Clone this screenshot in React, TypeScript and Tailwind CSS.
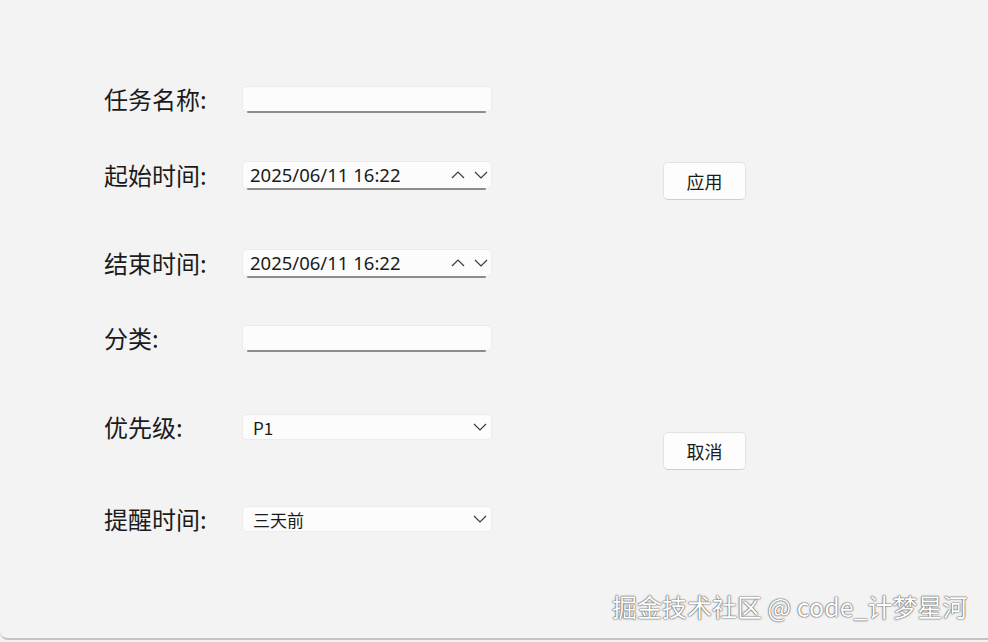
import React from 'react';

const cjk = { fontFamily: '"Noto Sans CJK SC", "Noto Sans", sans-serif' };

function Chevron({ up = false }: { up?: boolean }) {
  return (
    <svg width="14" height="8" viewBox="0 0 14 8" className="text-[#3a3a3a]">
      <polyline
        points={up ? '1,7 7,1 13,7' : '1,1 7,7 13,1'}
        fill="none"
        stroke="currentColor"
        strokeWidth="1.2"
      />
    </svg>
  );
}

function Field({ h, children, underline = true }: { h: string; children?: React.ReactNode; underline?: boolean }) {
  return (
    <div className={`relative w-[250px] ${h} rounded-[4px] bg-[#fcfcfc] border border-[#ebebeb] flex items-center`}>
      {children}
      {underline && <div className="absolute left-[4px] right-[5px] bottom-[-2px] h-[2px] bg-[#8c8c8c] rounded-full" />}
    </div>
  );
}

function Row({ mt, label, children }: { mt: string; label: string; children: React.ReactNode }) {
  return (
    <div className={`flex items-center ${mt}`}>
      <div className="w-[138px] text-[24px] leading-none text-[#1b1b1b]" style={cjk}>
        {label}
      </div>
      {children}
    </div>
  );
}

function DateField({ value }: { value: string }) {
  return (
    <Field h="h-[28px]">
      <span className="pl-[7px] text-[18.5px] text-[#1b1b1b] font-['Noto_Sans',sans-serif] leading-none">{value}</span>
      <div className="ml-auto flex items-center gap-[9px] pr-[3px]">
        <Chevron up />
        <Chevron />
      </div>
    </Field>
  );
}

function SelectField({ value }: { value: string }) {
  return (
    <Field h="h-[26px]" underline={false}>
      <span className="pl-[10px] text-[17px] text-[#1b1b1b] leading-none" style={cjk}>
        {value}
      </span>
      <div className="ml-auto pr-[4px] flex items-center">
        <Chevron />
      </div>
    </Field>
  );
}

function Btn({ mt, text }: { mt: string; text: string }) {
  return (
    <button
      className={`${mt} w-[83px] h-[38px] rounded-[5px] bg-[#fdfdfd] border border-[#e3e3e3] border-b-[#cfcfcf] text-[18px] text-[#1b1b1b] flex items-center justify-center`}
      style={cjk}
    >
      {text}
    </button>
  );
}

export default function App() {
  return (
    <div className="relative w-[988px] h-[642px] bg-[#f3f3f3] overflow-hidden">
      <div className="h-[640px] border-b-2 border-[#c4c4c4] rounded-bl-[8px] flex pl-[104px]">
        <div className="flex flex-col">
          <Row mt="mt-[86px]" label="任务名称:">
            <Field h="h-[26px]" />
          </Row>
          <Row mt="mt-[49px]" label="起始时间:">
            <DateField value="2025/06/11 16:22" />
          </Row>
          <Row mt="mt-[60px]" label="结束时间:">
            <DateField value="2025/06/11 16:22" />
          </Row>
          <Row mt="mt-[48px]" label="分类:">
            <Field h="h-[26px]" />
          </Row>
          <Row mt="mt-[63px]" label="优先级:">
            <SelectField value="P1" />
          </Row>
          <Row mt="mt-[66px]" label="提醒时间:">
            <SelectField value="三天前" />
          </Row>
        </div>
        <div className="ml-[171px] flex flex-col">
          <Btn mt="mt-[162px]" text="应用" />
          <Btn mt="mt-[232px]" text="取消" />
        </div>
      </div>
      <div
        className="absolute left-[612px] top-[594px] text-[25px] leading-none text-white [text-shadow:0_0_1px_#333,0_0_2px_#555]"
        style={cjk}
      >
        掘金技术社区 @ code_计梦星河
      </div>
    </div>
  );
}
